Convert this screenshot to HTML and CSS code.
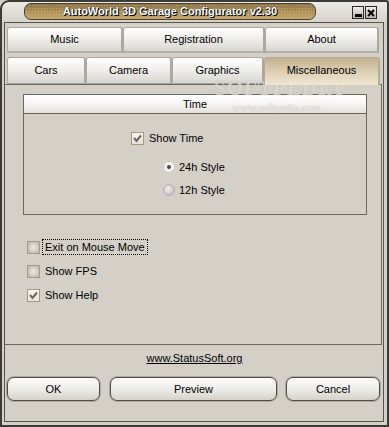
FILE: index.html
```html
<!DOCTYPE html>
<html lang="en">
<head>
    <meta charset="UTF-8">
    <meta name="viewport" content="width=device-width, initial-scale=1.0">
    <title>AutoWorld 3D Garage Configurator</title>
    <link rel="stylesheet" href="styles.css">
</head>
<body>
    <div class="window">
        <div class="titlebar">
            <div class="caption">AutoWorld 3D Garage Configurator v2.30</div>
            <div class="sysbtns">
                <span class="sysbtn"><span class="min-bar"></span></span>
                <span class="sysbtn">
                    <svg width="8" height="8" viewBox="0 0 8 8"><path d="M1 1 L7 7 M7 1 L1 7" stroke="#000" stroke-width="2"/></svg>
                </span>
            </div>
        </div>
        <div class="client">
            <div class="tabrow row1">
                <div class="tab w-music">Music</div>
                <div class="tab w-reg">Registration</div>
                <div class="tab w-about">About</div>
            </div>
            <div class="tabrow row2">
                <div class="tab w-cars">Cars</div>
                <div class="tab w-camera">Camera</div>
                <div class="tab w-graphics">Graphics</div>
                <div class="tab active w-misc">Miscellaneous</div>
            </div>
            <div class="page">
                <div class="group">
                    <div class="group-head">Time</div>
                    <div class="group-body">
                        <div class="opt show-time">
                            <span class="check on"><svg width="11" height="11" viewBox="0 0 11 11"><path d="M2 5 L4.5 8 L9 2.5" fill="none" stroke="#6a665e" stroke-width="2"/></svg></span>
                            <span>Show Time</span>
                        </div>
                        <div class="opt radio-row r24">
                            <span class="radio on"><span class="dot"></span></span>
                            <span>24h Style</span>
                        </div>
                        <div class="opt radio-row r12">
                            <span class="radio"></span>
                            <span>12h Style</span>
                        </div>
                    </div>
                </div>
                <div class="options">
                    <div class="opt">
                        <span class="check"></span>
                        <span class="focus">Exit on Mouse Move</span>
                    </div>
                    <div class="opt">
                        <span class="check"></span>
                        <span class="label">Show FPS</span>
                    </div>
                    <div class="opt">
                        <span class="check on"><svg width="11" height="11" viewBox="0 0 11 11"><path d="M2 5 L4.5 8 L9 2.5" fill="none" stroke="#6a665e" stroke-width="2"/></svg></span>
                        <span class="label">Show Help</span>
                    </div>
                </div>
            </div>
            <div class="linkrow"><a href="#">www.StatusSoft.org</a></div>
            <div class="buttons">
                <div class="btn b-ok">OK</div>
                <div class="btn b-preview">Preview</div>
                <div class="btn b-cancel">Cancel</div>
            </div>
        </div>
        <div class="watermark">
            <div class="wm-big">SOFTPEDIA</div>
            <div class="wm-small">www.softpedia.com</div>
        </div>
    </div>
</body>
</html>
```

FILE: styles.css
```css
*{
    margin: 0px;
    padding: 0px;
    box-sizing: border-box;
}
body{
    font-family: "Liberation Sans", Arial, sans-serif;
    font-size: 11px;
    color: #000;
    background: #d4d0c8;
}
.window{
    position: relative;
    width: 389px;
    height: 427px;
    border: 2px solid #3c3b38;
    border-top-left-radius: 9px;
    border-top-right-radius: 3px;
    background: linear-gradient(#eceae6, #d4d0c8 22px);
    display: flex;
    flex-direction: column;
}

/* title bar */
.titlebar{
    height: 20px;
    display: flex;
    align-items: flex-start;
    padding-left: 22px;
}
.caption{
    width: 292px;
    height: 17px;
    margin-top: 1px;
    border: 1px solid #4a4230;
    border-radius: 7px;
    background:
        radial-gradient(circle, rgba(220,190,120,0.55) 0.6px, transparent 1px) 0 0 / 3px 3px,
        linear-gradient(#8c7448, #b0925a 50%, #c4a66a);
    color: #fff;
    font-weight: bold;
    font-size: 11px;
    text-align: center;
    line-height: 15px;
    text-shadow: 1px 1px 0 #000, 0 0 1px #000;
}
.sysbtns{
    display: flex;
    gap: 1px;
    margin-left: 36px;
    margin-top: 4px;
}
.sysbtn{
    width: 12px;
    height: 13px;
    border: 1px solid #2a2a28;
    background: linear-gradient(#f0eee8, #b8b4ac);
    display: flex;
    align-items: center;
    justify-content: center;
}
.min-bar{
    width: 7px;
    height: 3px;
    background: #000;
    margin-top: 5px;
}

/* client area */
.client{
    height: 400px;
    margin: 0 3px 0 2px;
    border: 1px solid #56544e;
    background: #d4d0c8;
    padding: 4px 3px 0 2px;
    display: flex;
    flex-direction: column;
}
.tabrow{
    display: flex;
}
.row1{
    height: 26px;
}
.row2{
    height: 27px;
    margin-top: 4px;
}
.tab{
    display: flex;
    align-items: center;
    justify-content: center;
    padding-bottom: 1px;
    border: 1px solid #aca89f;
    border-right-width: 2px;
    border-top-left-radius: 3px;
    border-top-right-radius: 3px;
    background: linear-gradient(#ffffff, #f2f1ee 40%, #d8d6d0);
}
.row1 .tab{
    border-bottom: 2px solid #b4b0a8;
}
.tab.active{
    position: relative;
    z-index: 1;
    height: 28px;
    padding-bottom: 4px;
    border-bottom: none;
    border-color: #b4ac98;
    background: linear-gradient(#c2b290, #dccfb2 50%, #f0e7d2);
}
.w-music{ width: 116px; }
.w-reg{ width: 142px; }
.w-about{ width: 114px; }
.w-cars{ width: 79px; }
.w-camera{ width: 86px; }
.w-graphics{ width: 92px; }
.w-misc{ width: 116px; }

/* tab page */
.page{
    height: 261px;
    margin: 0 -2px 0 -2px;
    border: 1px solid #6c6860;
    border-left: none;
    padding: 9px 14px 0 18px;
}
.group{
    height: 121px;
    border: 1px solid #6c6860;
}
.group-head{
    height: 19px;
    border-bottom: 1px solid #6c6860;
    background: linear-gradient(#ffffff, #f6f5f2 50%, #e2e0da);
    text-align: center;
    line-height: 18px;
}
.group-body{
    padding-top: 16px;
}
.opt{
    display: flex;
    align-items: center;
    height: 16px;
    gap: 5px;
}
.show-time{
    padding-left: 107px;
}
.radio-row{
    padding-left: 139px;
    gap: 4px;
}
.r24{
    margin-top: 13px;
}
.r12{
    margin-top: 7px;
}
.check{
    width: 13px;
    height: 13px;
    border: 1px solid #a8987c;
    background: radial-gradient(circle, #e4e2dc 20%, #bcb8b0 90%);
    display: flex;
    align-items: center;
    justify-content: center;
}
.check.on{
    background: linear-gradient(#f6f4f0, #e6e2da);
}
.radio{
    width: 12px;
    height: 12px;
    border-radius: 50%;
    border: 1px solid #b4a8c8;
    background: radial-gradient(circle at 40% 40%, #f0eeea, #b8b4ac);
    display: flex;
    align-items: center;
    justify-content: center;
}
.radio.on{
    border: 1px dotted #a89c84;
    background: #f4f2ee;
}
.dot{
    width: 4px;
    height: 4px;
    border-radius: 50%;
    background: #4a4842;
}
.options{
    margin-top: 24px;
    padding-left: 4px;
    display: flex;
    flex-direction: column;
    gap: 8px;
}
.options .opt{
    gap: 3px;
}
.label{
    padding: 0 2px;
}
.focus{
    padding: 0 2px;
    outline: 1px dotted #000;
    line-height: 14px;
}

/* footer */
.linkrow{
    margin-top: 5px;
    height: 16px;
    text-align: center;
    line-height: 16px;
    padding-left: 2px;
}
.linkrow a{
    color: #000;
    text-decoration: underline;
}
.buttons{
    display: flex;
    margin-top: 11px;
    gap: 10px;
}
.btn{
    height: 24px;
    border: 1px solid #4e4c46;
    border-radius: 7px;
    box-shadow: 0 0 0 1px #b0aca4;
    background: linear-gradient(#fcfcfa, #eeece8 50%, #d6d2ca);
    display: flex;
    align-items: center;
    justify-content: center;
}
.b-ok{ width: 93px; }
.b-preview{ width: 167px; }
.b-cancel{ width: 94px; margin-left: -1px; }

/* watermark overlay */
.watermark{
    position: absolute;
    left: 212px;
    top: 79px;
    width: 125px;
    text-align: center;
    pointer-events: none;
}
.wm-big{
    font-family: "Liberation Serif", serif;
    font-weight: bold;
    font-size: 21px;
    line-height: 15px;
    letter-spacing: 1px;
    color: rgba(255,255,255,0.6);
    text-shadow: 0 0 1px rgba(110,100,80,0.5);
}
.wm-small{
    font-family: "Liberation Serif", serif;
    font-size: 11px;
    line-height: 12px;
    margin-top: 5px;
    color: rgba(255,255,255,0.75);
    text-shadow: 0 0 1px rgba(110,100,80,0.55);
}
```
